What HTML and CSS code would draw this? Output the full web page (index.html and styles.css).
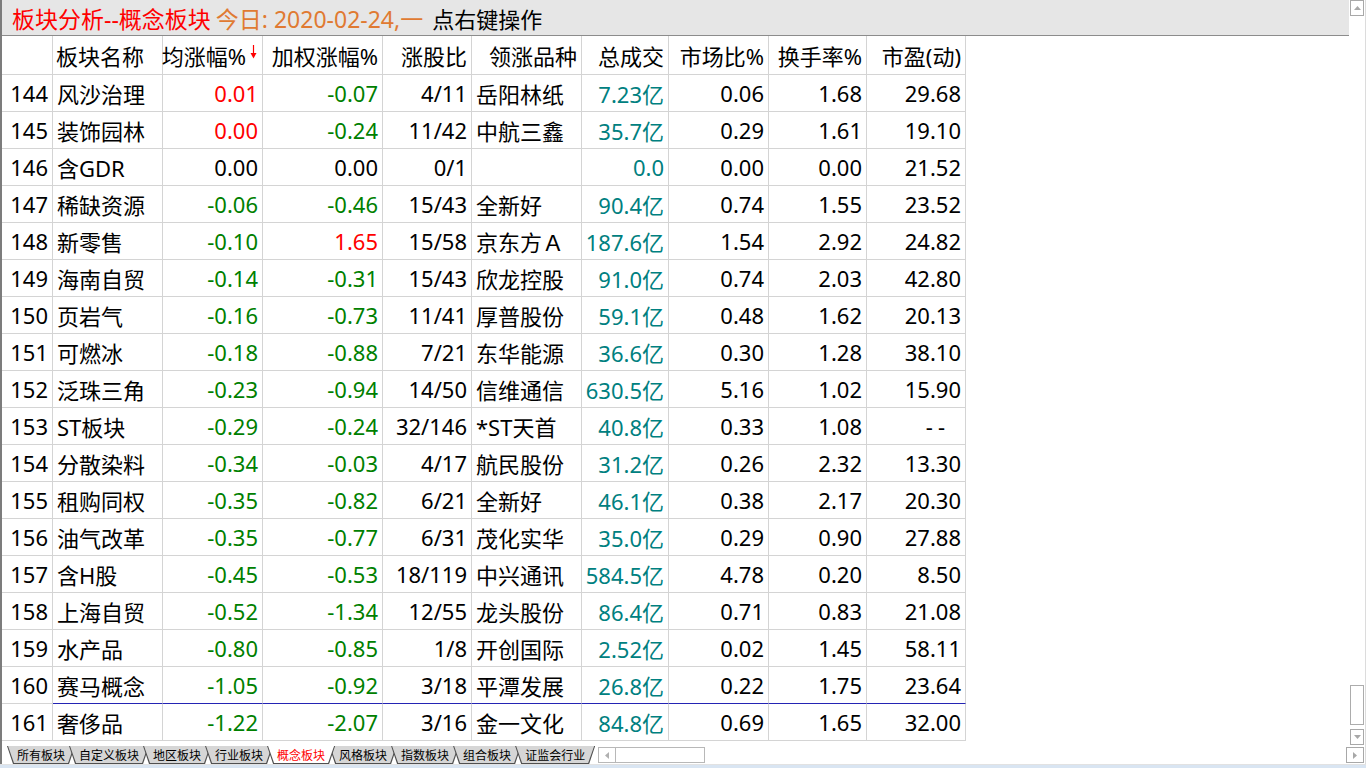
FILE: index.html
```html
<!DOCTYPE html>
<html lang="zh-CN">
<head>
<meta charset="utf-8">
<title>板块分析--概念板块</title>
<link rel="stylesheet" href="styles.css">
</head>
<body>
<div class="app">
  <div class="body">
    <div class="left">
      <div class="titlebar">
        <span class="t-red">板块分析--概念板块</span>
        <span class="t-orange">今日: 2020-02-24,一</span>
        <span class="t-black">点右键操作</span>
      </div>
      <div class="grid">
        <div class="row head">
          <div class="c"></div>
          <div class="c l">板块名称</div>
          <div class="c sortcol">均涨幅%<svg class="sort" width="7" height="14" viewBox="0 0 7 14"><line x1="3.5" y1="0" x2="3.5" y2="10" stroke="#ff0000" stroke-width="1.2"/><polygon points="0.5,8 6.5,8 3.5,13.5" fill="#ff0000"/></svg></div>
          <div class="c">加权涨幅%</div>
          <div class="c">涨股比</div>
          <div class="c">领涨品种</div>
          <div class="c">总成交</div>
          <div class="c">市场比%</div>
          <div class="c">换手率%</div>
          <div class="c">市盈(动)</div>
        </div>
        <div class="row"><div class="c">144</div><div class="c l">风沙治理</div><div class="c up">0.01</div><div class="c dn">-0.07</div><div class="c">4/11</div><div class="c l">岳阳林纸</div><div class="c tl">7.23亿</div><div class="c">0.06</div><div class="c">1.68</div><div class="c">29.68</div></div>
        <div class="row"><div class="c">145</div><div class="c l">装饰园林</div><div class="c up">0.00</div><div class="c dn">-0.24</div><div class="c">11/42</div><div class="c l">中航三鑫</div><div class="c tl">35.7亿</div><div class="c">0.29</div><div class="c">1.61</div><div class="c">19.10</div></div>
        <div class="row"><div class="c">146</div><div class="c l">含GDR</div><div class="c">0.00</div><div class="c">0.00</div><div class="c">0/1</div><div class="c l"></div><div class="c tl">0.0</div><div class="c">0.00</div><div class="c">0.00</div><div class="c">21.52</div></div>
        <div class="row"><div class="c">147</div><div class="c l">稀缺资源</div><div class="c dn">-0.06</div><div class="c dn">-0.46</div><div class="c">15/43</div><div class="c l">全新好</div><div class="c tl">90.4亿</div><div class="c">0.74</div><div class="c">1.55</div><div class="c">23.52</div></div>
        <div class="row"><div class="c">148</div><div class="c l">新零售</div><div class="c dn">-0.10</div><div class="c up">1.65</div><div class="c">15/58</div><div class="c l">京东方Ａ</div><div class="c tl">187.6亿</div><div class="c">1.54</div><div class="c">2.92</div><div class="c">24.82</div></div>
        <div class="row"><div class="c">149</div><div class="c l">海南自贸</div><div class="c dn">-0.14</div><div class="c dn">-0.31</div><div class="c">15/43</div><div class="c l">欣龙控股</div><div class="c tl">91.0亿</div><div class="c">0.74</div><div class="c">2.03</div><div class="c">42.80</div></div>
        <div class="row"><div class="c">150</div><div class="c l">页岩气</div><div class="c dn">-0.16</div><div class="c dn">-0.73</div><div class="c">11/41</div><div class="c l">厚普股份</div><div class="c tl">59.1亿</div><div class="c">0.48</div><div class="c">1.62</div><div class="c">20.13</div></div>
        <div class="row"><div class="c">151</div><div class="c l">可燃冰</div><div class="c dn">-0.18</div><div class="c dn">-0.88</div><div class="c">7/21</div><div class="c l">东华能源</div><div class="c tl">36.6亿</div><div class="c">0.30</div><div class="c">1.28</div><div class="c">38.10</div></div>
        <div class="row"><div class="c">152</div><div class="c l">泛珠三角</div><div class="c dn">-0.23</div><div class="c dn">-0.94</div><div class="c">14/50</div><div class="c l">信维通信</div><div class="c tl">630.5亿</div><div class="c">5.16</div><div class="c">1.02</div><div class="c">15.90</div></div>
        <div class="row"><div class="c">153</div><div class="c l">ST板块</div><div class="c dn">-0.29</div><div class="c dn">-0.24</div><div class="c">32/146</div><div class="c l">*ST天首</div><div class="c tl">40.8亿</div><div class="c">0.33</div><div class="c">1.08</div><div class="c"><span class="nil">--</span></div></div>
        <div class="row"><div class="c">154</div><div class="c l">分散染料</div><div class="c dn">-0.34</div><div class="c dn">-0.03</div><div class="c">4/17</div><div class="c l">航民股份</div><div class="c tl">31.2亿</div><div class="c">0.26</div><div class="c">2.32</div><div class="c">13.30</div></div>
        <div class="row"><div class="c">155</div><div class="c l">租购同权</div><div class="c dn">-0.35</div><div class="c dn">-0.82</div><div class="c">6/21</div><div class="c l">全新好</div><div class="c tl">46.1亿</div><div class="c">0.38</div><div class="c">2.17</div><div class="c">20.30</div></div>
        <div class="row"><div class="c">156</div><div class="c l">油气改革</div><div class="c dn">-0.35</div><div class="c dn">-0.77</div><div class="c">6/31</div><div class="c l">茂化实华</div><div class="c tl">35.0亿</div><div class="c">0.29</div><div class="c">0.90</div><div class="c">27.88</div></div>
        <div class="row"><div class="c">157</div><div class="c l">含H股</div><div class="c dn">-0.45</div><div class="c dn">-0.53</div><div class="c">18/119</div><div class="c l">中兴通讯</div><div class="c tl">584.5亿</div><div class="c">4.78</div><div class="c">0.20</div><div class="c">8.50</div></div>
        <div class="row"><div class="c">158</div><div class="c l">上海自贸</div><div class="c dn">-0.52</div><div class="c dn">-1.34</div><div class="c">12/55</div><div class="c l">龙头股份</div><div class="c tl">86.4亿</div><div class="c">0.71</div><div class="c">0.83</div><div class="c">21.08</div></div>
        <div class="row"><div class="c">159</div><div class="c l">水产品</div><div class="c dn">-0.80</div><div class="c dn">-0.85</div><div class="c">1/8</div><div class="c l">开创国际</div><div class="c tl">2.52亿</div><div class="c">0.02</div><div class="c">1.45</div><div class="c">58.11</div></div>
        <div class="row sel-above"><div class="c">160</div><div class="c l">赛马概念</div><div class="c dn">-1.05</div><div class="c dn">-0.92</div><div class="c">3/18</div><div class="c l">平潭发展</div><div class="c tl">26.8亿</div><div class="c">0.22</div><div class="c">1.75</div><div class="c">23.64</div></div>
        <div class="row"><div class="c">161</div><div class="c l">奢侈品</div><div class="c dn">-1.22</div><div class="c dn">-2.07</div><div class="c">3/16</div><div class="c l">金一文化</div><div class="c tl">84.8亿</div><div class="c">0.69</div><div class="c">1.65</div><div class="c">32.00</div></div>
      </div>
      <div class="tabbar">
        <div class="tabs">
          <div class="tab"><span>所有板块</span></div>
          <div class="tab"><span>自定义板块</span></div>
          <div class="tab"><span>地区板块</span></div>
          <div class="tab"><span>行业板块</span></div>
          <div class="tab active"><span>概念板块</span></div>
          <div class="tab"><span>风格板块</span></div>
          <div class="tab"><span>指数板块</span></div>
          <div class="tab"><span>组合板块</span></div>
          <div class="tab"><span>证监会行业</span></div>
        </div>
        <div class="hscroll">
          <div class="hbtn"><svg width="4" height="7" viewBox="0 0 4 7"><polygon points="4,0 4,7 0,3.5" fill="#b0b0b0"/></svg></div>
          <div class="htrack"></div>
        </div>
      </div>
    </div>
    <div class="vscroll">
      <div class="sbtn"><svg width="7" height="4" viewBox="0 0 7 4"><polygon points="0,4 7,4 3.5,0" fill="#a8a8a8"/></svg></div>
      <div class="sfill"></div>
      <div class="thumb"></div>
      <div class="sbtn down"><svg width="7" height="4" viewBox="0 0 7 4"><polygon points="0,0 7,0 3.5,4" fill="#a8a8a8"/></svg></div>
      <div class="sbtn right"><svg width="4" height="7" viewBox="0 0 4 7"><polygon points="0,0 0,7 4,3.5" fill="#a8a8a8"/></svg></div>
    </div>
  </div>
  <div class="status"></div>
</div>
</body>
</html>
```

FILE: styles.css
```css
html, body {
  margin: 0;
  padding: 0;
  background: #ffffff;
}
body {
  width: 1366px;
  height: 768px;
  overflow: hidden;
  font-family: "Noto Sans", "Noto Sans CJK SC", sans-serif;
  color: #000000;
}
.app {
  display: flex;
  flex-direction: column;
  height: 768px;
}
.body {
  display: flex;
  flex: 1;
  min-height: 0;
}
.left {
  flex: 1;
  display: flex;
  flex-direction: column;
  border-left: 2px solid #7c7c7c;
  min-width: 0;
}
.titlebar {
  height: 35px;
  background: #e6e6e6;
  border-bottom: 1px solid #8c8c8c;
  display: flex;
  align-items: center;
  padding-left: 10px;
  font-size: 23px;
  white-space: nowrap;
  gap: 5px;
}
.t-red { color: #ff0000; }
.t-orange { color: #e07a32; }
.t-black { color: #000000; margin-left: 4px; font-size: 22px; }

.grid {
  display: flex;
  flex-direction: column;
}
.row {
  display: grid;
  grid-template-columns: 51px 110px 100px 120px 89px 110px 87px 100px 98px 99px;
  height: 37px;
  font-size: 22px;
}
.row.head {
  height: 39px;
}
.c {
  box-sizing: border-box;
  border-right: 1px solid #d4d4d4;
  border-bottom: 1px solid #d4d4d4;
  padding: 0 4px 0 3px;
  display: flex;
  align-items: center;
  justify-content: flex-end;
  white-space: nowrap;
  overflow: hidden;
}
.c.l {
  justify-content: flex-start;
  padding-left: 4px;
}
.head .c.l {
  padding-left: 3px;
}
.c.sortcol {
  overflow: visible;
  padding-left: 0;
  padding-right: 5px;
}
.up { color: #ff0000; }
.dn { color: #008000; }
.tl { color: #008080; }
.sort {
  flex: none;
  margin-left: 4px;
  align-self: flex-start;
  margin-top: 9px;
}
.nil {
  letter-spacing: 5px;
  margin-right: 11px;
}
.sel-above .c + .c {
  border-bottom-color: #2424b4;
}

/* sheet tabs */
.tabbar {
  display: flex;
  align-items: flex-start;
  margin-top: 5px;
  height: 18px;
  padding-left: 5px;
}
.tabs {
  display: flex;
  height: 18px;
}
.tab {
  position: relative;
  height: 18px;
  margin-left: -6px;
  background: #505050;
  clip-path: polygon(0 0, 100% 0, calc(100% - 6px) 100%, 6px 100%);
  padding: 0 1px 1px 1px;
  box-sizing: border-box;
}
.tab:first-child {
  margin-left: 0;
}
.tab span {
  display: flex;
  align-items: center;
  height: 100%;
  padding: 0 9px;
  background: #d6d6d6;
  clip-path: polygon(0 0, 100% 0, calc(100% - 6px) 100%, 6px 100%);
  font-family: "Noto Sans CJK SC", sans-serif;
  font-size: 12px;
  color: #000000;
  white-space: nowrap;
}
.tab.active {
  z-index: 2;
}
.tab.active span {
  background: #ffffff;
  color: #ff0000;
}
.hscroll {
  display: flex;
  margin-left: 3px;
  margin-top: 1px;
  height: 16px;
  width: 107px;
  box-sizing: border-box;
  border: 1px solid #b8b8b8;
}
.hbtn {
  width: 16px;
  border-right: 1px solid #b8b8b8;
  display: flex;
  align-items: center;
  justify-content: center;
}
.htrack {
  flex: 1;
}

/* vertical scrollbar */
.vscroll {
  width: 17px;
  box-sizing: border-box;
  border-right: 1px solid #dcdcdc;
  padding-left: 1px;
  display: flex;
  flex-direction: column;
}
.sbtn {
  width: 14px;
  height: 16px;
  box-sizing: border-box;
  border: 1px solid #a8a8a8;
  background: #ffffff;
  display: flex;
  align-items: center;
  justify-content: center;
}
.sfill {
  flex: 1;
}
.thumb {
  width: 14px;
  height: 40px;
  box-sizing: border-box;
  border: 1px solid #acacac;
  margin-bottom: 4px;
}
.sbtn.down {
  margin-bottom: 2px;
}
.sbtn.right {
  width: 18px;
  margin-left: -4px;
  margin-bottom: 1px;
}
.status {
  height: 3px;
  border-top: 1px solid #e2e2e2;
  background: #d9e5f2;
}
```
